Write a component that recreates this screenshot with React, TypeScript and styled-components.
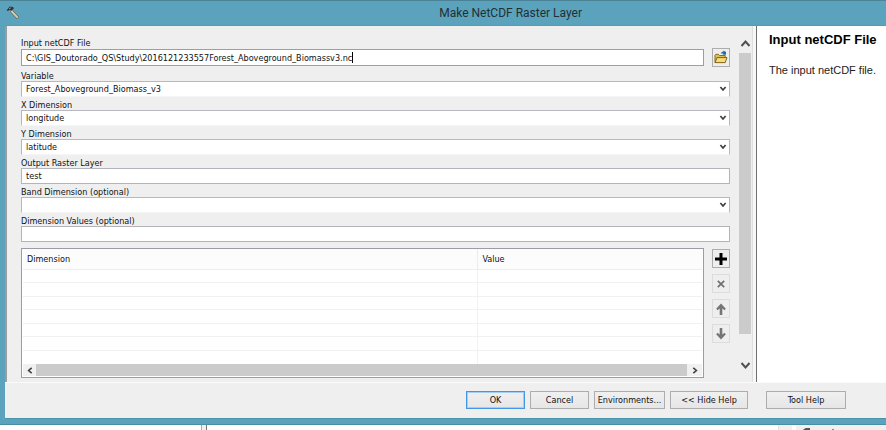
import React from 'react';
import styled, { createGlobalStyle } from 'styled-components';

const GlobalStyle = createGlobalStyle`
  * { box-sizing: border-box; }
  body {
    margin: 0;
    background: #fff;
    color: #111;
    font-family: "DejaVu Sans Condensed", "DejaVu Sans", sans-serif;
    font-size: 9px;
    line-height: 12px;
  }
  button, input, select { font: inherit; color: inherit; margin: 0; border-radius: 0; outline: none; }
`;

const Window = styled.main`
  display: flex;
  flex-direction: column;
  background: #5ba3bc;
  border-top: 1px solid #4a8396;
  border-bottom: 1px solid #4a8ea5;
  padding: 0 0 5px 5px;
`;

const TitleBar = styled.header`
  display: grid;
  grid-template-columns: 10fr auto 7fr;
  align-items: center;
  height: 24px;
`;

const Title = styled.h1`
  margin: 0;
  font: 400 12px/16px Roboto, sans-serif;
  color: #223036;
`;

const Body = styled.div`
  display: flex;
  background: #efefef;
  border-top: 1px solid #858b8d;
`;

const Parameters = styled.section`
  flex: 1;
  min-width: 0;
  display: flex;
  border-left: 2px solid #9a9d9e;
  padding: 9px 1px 4px 14px;
`;

const Form = styled.form`
  flex: 1;
  min-width: 0;
`;

const Label = styled.label`
  display: block;
  height: 13px;
  line-height: 16px;
`;

const FileRow = styled.div`
  display: flex;
  align-items: center;
  gap: 8px;
  height: 19px;
  margin-bottom: 1px;
`;

const FieldFrame = styled.div`
  flex: 1;
  position: relative;
`;

const TextField = styled.input<{ $active?: boolean }>`
  display: block;
  width: 100%;
  height: ${p => (p.$active ? 17 : 16)}px;
  padding: 0 4px;
  background: #fff;
  border: 1px solid ${p => (p.$active ? '#6aa9ee' : '#b4b5bb')};
`;

const Caret = styled.span`
  position: absolute;
  top: 3px;
  left: 331px;
  width: 1px;
  height: 11px;
  background: #000;
`;

const Select = styled.select`
  display: block;
  width: 100%;
  height: 16px;
  padding: 0 4px;
  appearance: none;
  background: #fff;
  border: 1px solid #b8b9c0;
  border-bottom-color: #f6f6f6;
`;

const SelectArrow = styled.svg`
  position: absolute;
  right: 3px;
  top: 5px;
  pointer-events: none;
`;

const TableArea = styled.div`
  display: flex;
  align-items: flex-start;
  gap: 8px;
  margin-top: 6px;
`;

const TableFrame = styled.div`
  flex: 1;
  background: #fff;
  border: 1px solid #9a9caa;
  padding: 0 1px 1px;
`;

const Table = styled.table`
  width: 100%;
  height: 115px;
  table-layout: fixed;
  border-collapse: collapse;

  th {
    height: 20px;
    padding: 0 4px;
    background: #fcfcfc;
    border-bottom: 1px solid #e6eef6;
    border-right: 1px solid #ececee;
    font-weight: 400;
    text-align: left;
  }
  th:first-child { width: 67%; }
  td {
    height: 13px;
    padding: 0;
    border-bottom: 1px solid #f1f1f1;
    border-right: 1px solid #f1f1f1;
  }
  th:last-child, td:last-child { border-right: 0; }
  tr:last-child td { border-bottom: 0; }
`;

const HorizontalScroll = styled.div`
  display: grid;
  grid-template-columns: 13px 1fr 15px;
  align-items: center;
  height: 12px;
  background: #f0f0f0;
`;

const Thumb = styled.div`
  align-self: stretch;
  background: #cbcbcb;
`;

const ScrollButton = styled.button`
  display: grid;
  place-items: center;
  padding: 0;
  border: 0;
  background: none;
`;

const RowTools = styled.div`
  display: flex;
  flex-direction: column;
  gap: 6px;
  padding-top: 1px;
`;

const ToolButton = styled.button`
  display: grid;
  place-items: center;
  width: 18px;
  height: 19px;
  padding: 0;
  background: #eeeeee;
  border: 1px solid #adadad;
  &:disabled { border-color: #dcdcdc; }
`;

const VerticalScroll = styled.div`
  display: grid;
  grid-template-rows: 18px 1fr 44px;
  width: 12px;
  margin-left: 9px;
`;

const VerticalTrack = styled.div`
  background: #cbcbcb;
`;

const DownButton = styled(ScrollButton)`
  align-self: end;
  height: 26px;
`;

const Splitter = styled.div`
  width: 4px;
  background: #f7f7f7;
  border-left: 1px solid #dedede;
`;

const Help = styled.aside`
  width: 14%;
  min-width: 130px;
  padding: 5px 0 0 12px;
  background: #fff;
  border-left: 1px solid #6f6f6f;
  font-family: "Liberation Sans", Arial, sans-serif;

  h2 { margin: 0 0 12px; font-size: 13px; line-height: 18px; white-space: nowrap; color: #000; }
  p { margin: 0; font-size: 11px; line-height: 18px; color: #222; white-space: nowrap; }
`;

const Footer = styled.footer`
  display: flex;
  justify-content: flex-end;
  gap: 5px;
  padding: 8px 40px 9px 0;
  background: #efefef;
  border-top: 1px solid #fafafa;
  border-bottom: 1px solid #4a92aa;
`;

const FooterButton = styled.button<{ $width?: number; $primary?: boolean; $apart?: boolean }>`
  width: ${p => p.$width ?? 59}px;
  height: 18px;
  margin-left: ${p => (p.$apart ? 13 : 0)}px;
  padding: 0;
  background: linear-gradient(#f0f0f0, #e6e6e6);
  border: 1px solid ${p => (p.$primary ? '#4595e6' : '#adadad')};
  box-shadow: ${p => (p.$primary ? 'inset 0 0 0 1px #a5cef5' : 'none')};
  white-space: nowrap;
`;

const Behind = styled.div`
  display: flex;
  height: 6px;
  overflow: hidden;
`;

const Pane = styled.div<{ $share?: number; $edge?: boolean }>`
  flex: ${p => p.$share ?? 1};
  background: #fff;
  border-left: ${p => (p.$edge ? '1px solid #777' : '0')};
`;

const Gutter = styled.div<{ $width: number; $plain?: boolean }>`
  width: ${p => p.$width}px;
  background: #f0f0f0;
  border-left: 1px solid ${p => (p.$plain ? '#e4e4e4' : '#aaa')};
`;

const Corner = styled.div`
  width: 94px;
  background: #f0f0f0;
  border-left: 4px solid #fff;
  svg { display: block; margin-left: 6px; }
`;

function Hammer() {
  return (
    <svg width="15" height="15" viewBox="0 0 15 15" aria-hidden="true">
      <path d="M6 4.5 13 12" stroke="#4d4a44" strokeWidth="3" />
      <path d="M6.2 4.7 12.8 11.8" stroke="#dccbaa" strokeWidth="2" />
      <path d="M1.6 4.4 4.6.6l3.6.3.6 1.5-2.6 2.4-1.3-1L2.9 5Z" fill="#303538" />
      <path d="M4 2.6 6 1.8" stroke="#a5afb2" strokeWidth=".8" />
    </svg>
  );
}

function Folder() {
  return (
    <svg width="16" height="15" viewBox="0 0 16 15" aria-hidden="true">
      <path d="M2 12.5V5.2l.8-.9h2.6l1 1.2h5.8v2" fill="#e2c04e" stroke="#8a6c1c" />
      <path d="m2 12.6 2-5h10l-1.8 5Z" fill="#f5dc7c" stroke="#80631a" />
      <path d="M7.7 3.6C8.3 1.8 9.4 1.5 10.4 1.7V.6L13 2v2.8H9.6l1-.9C9.4 3.5 8.6 3.4 7.7 3.6Z" fill="#216ca8" />
    </svg>
  );
}

const chevrons = {
  up: 'M1.5 7 5.5 2.5 9.5 7',
  down: 'M1.5 3 5.5 7.5 9.5 3',
};

function Chevron({ to }: { to: 'up' | 'down' }) {
  return (
    <svg width="11" height="10" viewBox="0 0 11 10" aria-hidden="true">
      <path d={chevrons[to]} fill="none" stroke="#505050" strokeWidth="2" />
    </svg>
  );
}

function SideChevron({ left }: { left?: boolean }) {
  return (
    <svg width="6" height="7" viewBox="0 0 6 7" aria-hidden="true">
      <path d={left ? 'M4.7.8 1.6 3.5l3.1 2.7' : 'M1.3.8l3.1 2.7-3.1 2.7'} fill="none" stroke="#404040" strokeWidth="1.6" />
    </svg>
  );
}

const arrows = {
  up: 'M3.7 12h2.6V5.5L8.5 7.3 9.8 5.8 5 .5.2 5.8 1.5 7.3 3.7 5.5Z',
  down: 'M3.7 0h2.6v6.5L8.5 4.7 9.8 6.2 5 11.5.2 6.2 1.5 4.7 3.7 6.5Z',
};

function Arrow({ to }: { to: 'up' | 'down' }) {
  return (
    <svg width="10" height="12" viewBox="0 0 10 12" aria-hidden="true">
      <path d={arrows[to]} fill="#757575" />
    </svg>
  );
}

function Choice({ id, label, value }: { id: string; label: string; value: string }) {
  return (
    <>
      <Label htmlFor={id}>{label}</Label>
      <FieldFrame>
        <Select id={id} defaultValue={value}>
          <option value={value}>{value}</option>
        </Select>
        <SelectArrow width="8" height="6" viewBox="0 0 8 6" aria-hidden="true">
          <path d="M1.4 1 4 4l2.6-3" fill="none" stroke="#404040" strokeWidth="1.7" />
        </SelectArrow>
      </FieldFrame>
    </>
  );
}

const emptyRows = [1, 2, 3, 4, 5, 6, 7];

export default function App() {
  return (
    <>
      <GlobalStyle />
      <Window>
        <TitleBar>
          <Hammer />
          <Title>Make NetCDF Raster Layer</Title>
        </TitleBar>
        <Body>
          <Parameters>
            <Form>
              <Label htmlFor="file">Input netCDF File</Label>
              <FileRow>
                <FieldFrame>
                  <TextField
                    id="file"
                    $active
                    defaultValue={'C:\\GIS_Doutorado_QS\\Study\\2016121233557Forest_Aboveground_Biomassv3.nc'}
                  />
                  <Caret />
                </FieldFrame>
                <ToolButton type="button" aria-label="Browse"><Folder /></ToolButton>
              </FileRow>
              <Choice id="variable" label="Variable" value="Forest_Aboveground_Biomass_v3" />
              <Choice id="x" label="X Dimension" value="longitude" />
              <Choice id="y" label="Y Dimension" value="latitude" />
              <Label htmlFor="output">Output Raster Layer</Label>
              <TextField id="output" defaultValue="test" />
              <Choice id="band" label="Band Dimension (optional)" value="" />
              <Label htmlFor="values">Dimension Values (optional)</Label>
              <TextField id="values" />
              <TableArea>
                <TableFrame>
                  <Table>
                    <thead>
                      <tr><th scope="col">Dimension</th><th scope="col">Value</th></tr>
                    </thead>
                    <tbody>
                      {emptyRows.map(row => <tr key={row}><td /><td /></tr>)}
                    </tbody>
                  </Table>
                  <HorizontalScroll>
                    <ScrollButton type="button" aria-label="Scroll left"><SideChevron left /></ScrollButton>
                    <Thumb />
                    <ScrollButton type="button" aria-label="Scroll right"><SideChevron /></ScrollButton>
                  </HorizontalScroll>
                </TableFrame>
                <RowTools>
                  <ToolButton type="button" aria-label="Add">
                    <svg width="12" height="12" viewBox="0 0 12 12"><path d="M6 0v12M0 6h12" stroke="#000" strokeWidth="3" /></svg>
                  </ToolButton>
                  <ToolButton type="button" aria-label="Remove" disabled>
                    <svg width="8" height="8" viewBox="0 0 8 8"><path d="m.8.8 6.4 6.4M7.2.8.8 7.2" stroke="#707070" strokeWidth="1.7" /></svg>
                  </ToolButton>
                  <ToolButton type="button" aria-label="Move up" disabled><Arrow to="up" /></ToolButton>
                  <ToolButton type="button" aria-label="Move down" disabled><Arrow to="down" /></ToolButton>
                </RowTools>
              </TableArea>
            </Form>
            <VerticalScroll>
              <ScrollButton type="button" aria-label="Scroll up"><Chevron to="up" /></ScrollButton>
              <VerticalTrack />
              <DownButton type="button" aria-label="Scroll down"><Chevron to="down" /></DownButton>
            </VerticalScroll>
          </Parameters>
          <Splitter />
          <Help>
            <h2>Input netCDF File</h2>
            <p>The input netCDF file.</p>
          </Help>
        </Body>
        <Footer>
          <FooterButton type="button" $primary>OK</FooterButton>
          <FooterButton type="button">Cancel</FooterButton>
          <FooterButton type="button" $width={71}>Environments...</FooterButton>
          <FooterButton type="button" $width={78}>{'<< Hide Help'}</FooterButton>
          <FooterButton type="button" $width={80} $apart>Tool Help</FooterButton>
        </Footer>
      </Window>
      <Behind>
        <Pane $share={6} />
        <Gutter $width={5} />
        <Pane $share={17} $edge />
        <Gutter $width={14} $plain />
        <Corner>
          <svg width="40" height="6" viewBox="0 0 40 6" aria-hidden="true">
            <path d="M1 6 4 4h4" fill="none" stroke="#555" strokeWidth="2" />
            <path d="M31 4v2" stroke="#2a6fc9" strokeWidth="1.5" />
          </svg>
        </Corner>
      </Behind>
    </>
  );
}
